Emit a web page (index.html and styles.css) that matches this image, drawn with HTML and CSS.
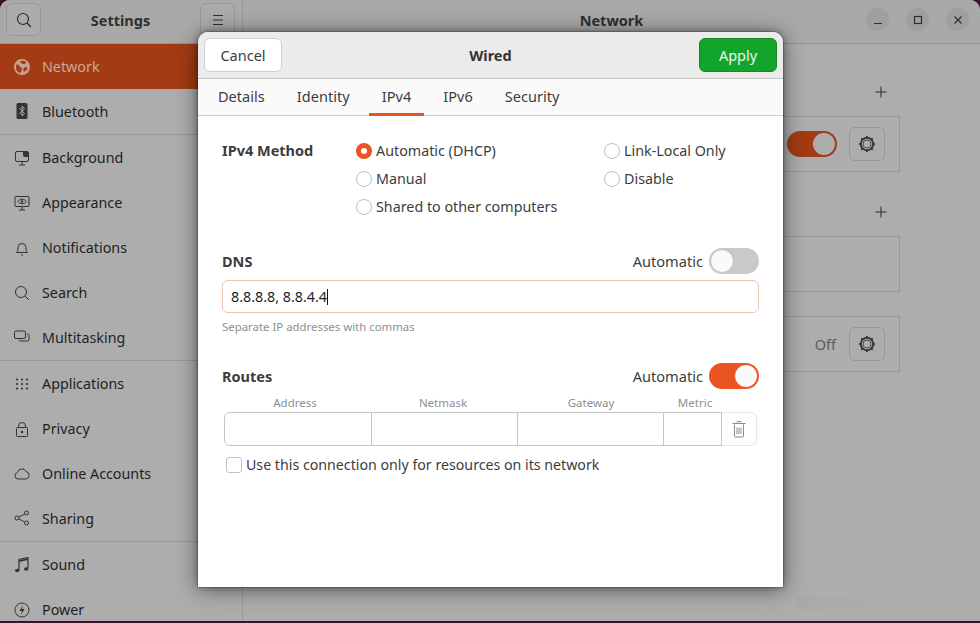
FILE: index.html
```html
<!DOCTYPE html>
<html lang="en">
<head>
<meta charset="utf-8">
<title>Settings - Network</title>
<link rel="stylesheet" href="styles.css">
</head>
<body>
<div class="window">
  <aside class="sidebar">
    <header class="side-head">
      <button class="head-btn"><svg width="16" height="16" viewBox="0 0 16 16" class="ic"><circle cx="7" cy="7" r="5.500"/><path d="M11 11l4 4"/></svg></button>
      <span class="title">Settings</span>
      <button class="head-btn"><svg width="16" height="16" viewBox="0 0 16 16" class="ic"><path d="M3 3.500h10M3 8h10M3 12.500h10"/></svg></button>
    </header>
    <nav class="side-list">
      <a class="row selected"><svg width="16" height="16" viewBox="0 0 16 16" class="row-ic fill"><path d="M8 0a8 8 0 1 0 0 16A8 8 0 0 0 8 0zM2 8c0-1 .3-2 .7-2.800L5 6l1 2 2 1-.5 3L6 14A6 6 0 0 1 2 8zm8 5l-1-3 2-2 2.800.5A6 6 0 0 1 10 13zM9 5L7 4 6 2.400A6 6 0 0 1 12 3l-1 2z" fill-rule="evenodd"/></svg><span>Network</span></a>
      <a class="row sep"><svg width="16" height="16" viewBox="0 0 16 16" class="row-ic"><rect x="2.500" y="0" width="11" height="16" rx="1.500" class="solid"/><path d="M5.500 5l5 5.500L8 13V3l2.500 2.500L5.500 11" class="inv"/></svg><span>Bluetooth</span></a>
      <a class="row"><svg width="16" height="16" viewBox="0 0 16 16" class="row-ic ln"><path d="M3 1.500h10a1.500 1.500 0 0 1 1.500 1.500v7a1.500 1.500 0 0 1-1.500 1.500H3A1.500 1.500 0 0 1 1.500 10V3A1.500 1.500 0 0 1 3 1.500zM5 15h6M8 11.500V15"/><path d="M9 2h5v5H11a2 2 0 0 1-2-2z" class="solid"/></svg><span>Background</span></a>
      <a class="row"><svg width="16" height="16" viewBox="0 0 16 16" class="row-ic ln"><rect x="1" y="1.500" width="14" height="10" rx="1"/><path d="M3.500 6.500C6 3.500 10 3.500 12.500 6.500 10 9.500 6 9.500 3.500 6.500zM5 15h6M8 11.500V15"/><circle cx="8" cy="6.500" r="1.300" class="solid"/></svg><span>Appearance</span></a>
      <a class="row"><svg width="16" height="16" viewBox="0 0 16 16" class="row-ic ln"><path d="M2.500 12.500c1.500-1 1.500-3 1.500-5a4 4 0 0 1 8 0c0 2 0 4 1.500 5zM7 15h2"/></svg><span>Notifications</span></a>
      <a class="row"><svg width="16" height="16" viewBox="0 0 16 16" class="row-ic ln"><circle cx="7" cy="7" r="5.500"/><path d="M11 11l4 4"/></svg><span>Search</span></a>
      <a class="row sep"><svg width="16" height="16" viewBox="0 0 16 16" class="row-ic ln"><rect x="0.500" y="2" width="11" height="7.500" rx="1.500"/><path d="M13 5h.5A1.500 1.500 0 0 1 15 6.500v4a1.500 1.500 0 0 1-1.500 1.500H6.500A1.500 1.500 0 0 1 5 11v-.5"/></svg><span>Multitasking</span></a>
      <a class="row"><svg width="16" height="16" viewBox="0 0 16 16" class="row-ic"><g class="solid"><circle cx="3" cy="3.500" r="1.100"/><circle cx="8" cy="3.500" r="1.100"/><circle cx="13" cy="3.500" r="1.100"/><circle cx="3" cy="8" r="1.100"/><circle cx="8" cy="8" r="1.100"/><circle cx="13" cy="8" r="1.100"/><circle cx="3" cy="12.500" r="1.100"/><circle cx="8" cy="12.500" r="1.100"/><circle cx="13" cy="12.500" r="1.100"/></g></svg><span>Applications</span></a>
      <a class="row"><svg width="16" height="16" viewBox="0 0 16 16" class="row-ic ln"><rect x="2.500" y="6.500" width="11" height="9" rx="1"/><path d="M4.500 6.500V5a3.500 3.500 0 0 1 7 0v1.500"/><circle cx="8" cy="11" r="1.200" class="solid"/></svg><span>Privacy</span></a>
      <a class="row"><svg width="16" height="16" viewBox="0 0 16 16" class="row-ic ln"><path d="M4 13a3.300 3.300 0 0 1-.5-6.500 4.500 4.500 0 0 1 8.500-1 3.800 3.800 0 0 1 0 7.500z"/></svg><span>Online Accounts</span></a>
      <a class="row sep"><svg width="16" height="16" viewBox="0 0 16 16" class="row-ic ln"><circle cx="3" cy="8" r="2"/><circle cx="12.500" cy="3" r="2"/><circle cx="12.500" cy="13" r="2"/><path d="M5 7l5.700-3M5 9l5.700 3"/></svg><span>Sharing</span></a>
      <a class="row"><svg width="16" height="16" viewBox="0 0 16 16" class="row-ic"><path d="M5 13V2.500L14 .5V11" class="lnp"/><path d="M5 3.200l9-2V3l-9 2z" class="solid"/><ellipse cx="3.200" cy="13.500" rx="2.200" ry="1.800" class="solid"/><ellipse cx="12.200" cy="12" rx="2.200" ry="1.800" class="solid"/></svg><span>Sound</span></a>
      <a class="row"><svg width="16" height="16" viewBox="0 0 16 16" class="row-ic ln"><circle cx="8" cy="8" r="7"/><path d="M9 3L5.500 9H8l-1 4 3.500-6H8z" class="solid"/></svg><span>Power</span></a>
    </nav>
  </aside>
  <main class="main">
    <header class="main-head">
      <span class="title">Network</span>
      <div class="wm">
        <span class="wm-btn"><svg width="16" height="16" viewBox="0 0 16 16" class="ic"><path d="M4 11.500h8"/></svg></span>
        <span class="wm-btn"><svg width="16" height="16" viewBox="0 0 16 16" class="ic"><rect x="4.500" y="4.500" width="7" height="7"/></svg></span>
        <span class="wm-btn"><svg width="16" height="16" viewBox="0 0 16 16" class="ic"><path d="M4.500 4.500l7 7M11.500 4.500l-7 7"/></svg></span>
      </div>
    </header>
    <div class="panel">
      <div class="sec-head"><svg width="14" height="14" viewBox="0 0 14 14" class="plus"><path d="M7 1.500v11M1.500 7h11"/></svg></div>
      <div class="frame">
        <span class="switch bg-on dim"><i></i></span>
        <button class="gear"><svg width="20" height="20" viewBox="0 0 20 20"><use href="#gear"/></svg></button>
      </div>
      <div class="sec-head second"><svg width="14" height="14" viewBox="0 0 14 14" class="plus"><path d="M7 1.500v11M1.500 7h11"/></svg></div>
      <div class="frame"></div>
      <div class="frame third">
        <span class="off">Off</span>
        <button class="gear"><svg width="20" height="20" viewBox="0 0 20 20"><use href="#gear"/></svg></button>
      </div>
    </div>
  </main>
  <div class="blur-mark"></div>
  <section class="dialog">
    <header class="dlg-head">
      <button class="btn">Cancel</button>
      <span class="dlg-title">Wired</span>
      <button class="btn apply">Apply</button>
    </header>
    <div class="tabs">
      <a class="tab">Details</a>
      <a class="tab">Identity</a>
      <a class="tab active">IPv4</a>
      <a class="tab">IPv6</a>
      <a class="tab">Security</a>
    </div>
    <div class="dlg-body">
      <div class="method">
        <strong class="label">IPv4 Method</strong>
        <label class="radio on"><i></i>Automatic (DHCP)</label>
        <label class="radio"><i></i>Link-Local Only</label>
        <span></span>
        <label class="radio"><i></i>Manual</label>
        <label class="radio"><i></i>Disable</label>
        <span></span>
        <label class="radio"><i></i>Shared to other computers</label>
      </div>
      <div class="line-head dns-head">
        <strong class="label">DNS</strong>
        <span class="auto">Automatic</span>
        <span class="switch"><i></i></span>
      </div>
      <div class="entry">8.8.8.8, 8.8.4.4<b class="caret"></b></div>
      <p class="hint">Separate IP addresses with commas</p>
      <div class="line-head routes-head">
        <strong class="label">Routes</strong>
        <span class="auto">Automatic</span>
        <span class="switch active-sw"><i></i></span>
      </div>
      <div class="route-labels">
        <span>Address</span><span>Netmask</span><span>Gateway</span><span>Metric</span>
      </div>
      <div class="route-table">
        <span class="cell c1"></span><span class="cell c2"></span><span class="cell c3"></span><span class="cell c4"></span>
        <span class="trash"><svg width="16" height="18" viewBox="0 0 16 18" class="trash-ic"><path d="M3.500 4.500V16a1 1 0 0 0 1 1h7a1 1 0 0 0 1-1V4.500M6 2.500V1.500h4v1M1.500 3.500h13M6 7.500V14M8 7.500V14M10 7.500V14"/></svg></span>
      </div>
      <label class="check"><i></i>Use this connection only for resources on its network</label>
    </div>
  </section>
  <svg width="0" height="0" class="defs"><defs><g id="gear"><circle cx="10" cy="10" r="6.200" fill="none" stroke="#3a3a3a" stroke-width="2"/><circle cx="10" cy="10" r="4" fill="none" stroke="#3a3a3a" stroke-width=".8"/><path d="M10 2v2.500M10 15.500V18M2 10h2.500M15.500 10H18M4.300 4.300l1.800 1.800M13.900 13.900l1.800 1.800M4.300 15.700l1.800-1.800M13.900 6.100l1.800-1.800" stroke="#3a3a3a" stroke-width="2"/></g></defs></svg>
</div>
</body>
</html>
```
FILE: styles.css
```css
* { box-sizing: border-box; }
html, body { margin: 0; height: 100%; }
body {
  background: #3d1030;
  font-family: "Noto Sans", "Open Sans", sans-serif;
  font-size: 14.500px;
  color: #333;
  overflow: hidden;
}
button { font: inherit; color: inherit; padding: 0; margin: 0; }
a { display: block; }

.window {
  position: relative;
  width: 980px;
  height: 621px;
  display: flex;
  background: #adadad;
  border-radius: 10px 10px 0 0;
  overflow: hidden;
}
.defs { position: absolute; }

.sidebar { width: 243px; flex: none; border-right: 1px solid #999; background: #adadad; }
.side-head {
  height: 44px;
  display: flex;
  align-items: center;
  justify-content: space-between;
  padding: 0 7px 4px 6px;
  background: #a9a9a9;
  border-bottom: 1px solid #949494;
}
.title { font-weight: 700; font-size: 14.500px; color: #2f2f2f; }
.head-btn {
  width: 35px;
  height: 33px;
  display: flex;
  align-items: center;
  justify-content: center;
  background: #ababab;
  border: 1px solid #979797;
  border-radius: 6px;
}
.ic { fill: none; stroke: #2f2f2f; stroke-width: 1.200; }

.row {
  height: 45px;
  display: flex;
  align-items: center;
  gap: 12px;
  padding-left: 14px;
  font-size: 14.300px;
  color: #1f1f1f;
}
.row.selected { background: #a33b14; color: #c9a99b; }
.row.sep { height: 46px; padding-bottom: 1px; border-bottom: 1px solid #999; }
.row-ic { flex: none; }
.row-ic.ln, .ln { fill: none; stroke: #333; stroke-width: 1; }
.row-ic.fill { fill: #c9a08f; }
.row-ic .solid, .ln .solid, .solid { fill: #333; stroke: none; }
.inv { fill: none; stroke: #adadad; stroke-width: 1; }
.lnp { fill: none; stroke: #333; stroke-width: 1.200; }

.main { flex: 1; min-width: 0; }
.main-head {
  position: relative;
  height: 44px;
  display: flex;
  align-items: center;
  justify-content: center;
  padding-bottom: 4px;
  background: #a9a9a9;
  border-bottom: 1px solid #949494;
}
.wm { position: absolute; right: 11px; top: 8px; display: flex; gap: 17px; }
.wm-btn {
  width: 23px;
  height: 23px;
  display: flex;
  align-items: center;
  justify-content: center;
  border-radius: 50%;
  background: #9f9f9f;
}
.panel { width: 577px; margin-left: 80px; }
.sec-head { height: 72px; display: flex; justify-content: flex-end; align-items: flex-end; padding: 0 12px 17px 0; }
.sec-head.second { height: 64px; }
.plus { fill: none; stroke: #2b2b2b; stroke-width: 1; }
.frame {
  height: 56px;
  border: 1px solid #979797;
  display: flex;
  align-items: center;
  justify-content: flex-end;
  padding-right: 14px;
  gap: 12px;
}
.frame.third { margin-top: 24px; }
.off { color: #5c5c5c; margin-right: 1px; }
.gear {
  width: 36px;
  height: 34px;
  display: flex;
  align-items: center;
  justify-content: center;
  background: #adadad;
  border: 1px solid #979797;
  border-radius: 6px;
}

.switch {
  position: relative;
  width: 50px;
  height: 26px;
  flex: none;
  border-radius: 13px;
  background: #c9c9c9;
  display: block;
}
.switch i {
  position: absolute;
  top: 1px;
  left: 1px;
  width: 24px;
  height: 24px;
  border-radius: 50%;
  background: #fafafa;
  border: 1px solid #bdbdbd;
}
.switch.active-sw { background: #e95420; }
.switch.active-sw i { left: auto; right: 1px; border-color: #e95420; }
.switch.bg-on { background: #a33b14; }
.switch.bg-on i { left: auto; right: 2px; top: 2px; width: 22px; height: 22px; background: #adadad; border: none; }

.blur-mark {
  position: absolute;
  right: 0;
  top: 597px;
  width: 183px;
  height: 13px;
  background: linear-gradient(90deg, #a9a9a9, #acacac 40%, #adadad);
}

.dialog {
  position: absolute;
  left: 198px;
  top: 32px;
  width: 585px;
  height: 555px;
  background: #fff;
  border-radius: 10px 10px 0 0;
  overflow: hidden;
  box-shadow: 0 2px 22px rgba(0, 0, 0, .5), 0 0 6px rgba(0, 0, 0, .35), 0 0 0 1px rgba(0, 0, 0, .15);
  color: #3d3d3d;
}
.dlg-head {
  height: 47px;
  display: flex;
  align-items: center;
  justify-content: space-between;
  padding: 0 6px 1px;
  background: #ebebeb;
  border-bottom: 1px solid #c4c4c4;
}
.dlg-title { font-weight: 700; color: #333; }
.btn {
  width: 78px;
  height: 34px;
  background: #fff;
  border: 1px solid #cfcfcf;
  border-radius: 6px;
}
.btn.apply { background: #12a52b; border-color: #0f8a24; color: #eaf7ec; }
.tabs {
  height: 37px;
  display: flex;
  gap: 6px;
  padding-left: 7px;
  background: #fafafa;
  border-bottom: 1px solid #cfcfcf;
}
.tab {
  padding: 0 13px;
  line-height: 35px;
  height: 37px;
  letter-spacing: .04px;
  border-bottom: 3px solid transparent;
}
.tab.active { border-bottom-color: #e95420; }

.dlg-body { padding: 20px 24px 0; }
.label { font-weight: 700; }
.method {
  display: grid;
  grid-template-columns: 134px 248px 1fr;
  grid-auto-rows: 28px;
  align-items: center;
}
.radio { display: flex; align-items: center; gap: 4px; font-size: 14.300px; }
.radio i {
  width: 16px;
  height: 16px;
  margin-top: 2px;
  border-radius: 50%;
  border: 1px solid #c0c0c0;
  background: #fff;
  flex: none;
}
.radio.on i { border: 5px solid #e95420; background: #fff; }
.line-head { display: flex; align-items: center; height: 26px; }
.line-head .label { margin-right: auto; }
.auto { margin-right: 6px; font-size: 14.600px; }
.dns-head { margin-top: 28px; }
.entry {
  height: 33px;
  margin-top: 6px;
  padding-left: 8px;
  line-height: 31px;
  font-size: 14.300px;
  border: 1px solid #efc3b4;
  border-radius: 6px;
  color: #1f1f1f;
}
.caret { display: inline-block; width: 1px; height: 16px; background: #111; vertical-align: -3px; }
.hint { margin: 7px 0 0; font-size: 11.400px; line-height: 14px; color: #8f8f8f; }
.routes-head { margin-top: 29px; }
.route-labels {
  display: grid;
  grid-template-columns: 142px 154px 142px 66px;
  padding-left: 2px;
  margin-top: 7px;
  height: 16px;
  font-size: 11.500px;
  line-height: 14px;
  color: #8f8f8f;
  text-align: center;
}
.route-table {
  display: flex;
  width: 533px;
  height: 34px;
  margin: 0 0 0 2px;
}
.cell { border: 1px solid #c4c4c4; border-left: 0; display: block; }
.cell.c1 { width: 148px; border-left: 1px solid #c4c4c4; border-radius: 6px 0 0 6px; }
.cell.c2 { width: 146px; }
.cell.c3 { width: 146px; }
.cell.c4 { width: 58px; }
.trash {
  flex: 1;
  display: flex;
  align-items: center;
  justify-content: center;
  border: 1px solid #e6e6e6;
  border-left: 0;
  border-radius: 0 6px 6px 0;
}
.trash-ic { fill: none; stroke: #8c8c8c; stroke-width: 1; }
.check { display: flex; align-items: center; gap: 4px; margin: 7px 0 0 4px; height: 22px; font-size: 14.200px; }
.check i {
  width: 16px;
  height: 16px;
  margin-top: 1px;
  border: 1px solid #c4c4c4;
  border-radius: 3px;
  background: #fff;
  flex: none;
}
```
